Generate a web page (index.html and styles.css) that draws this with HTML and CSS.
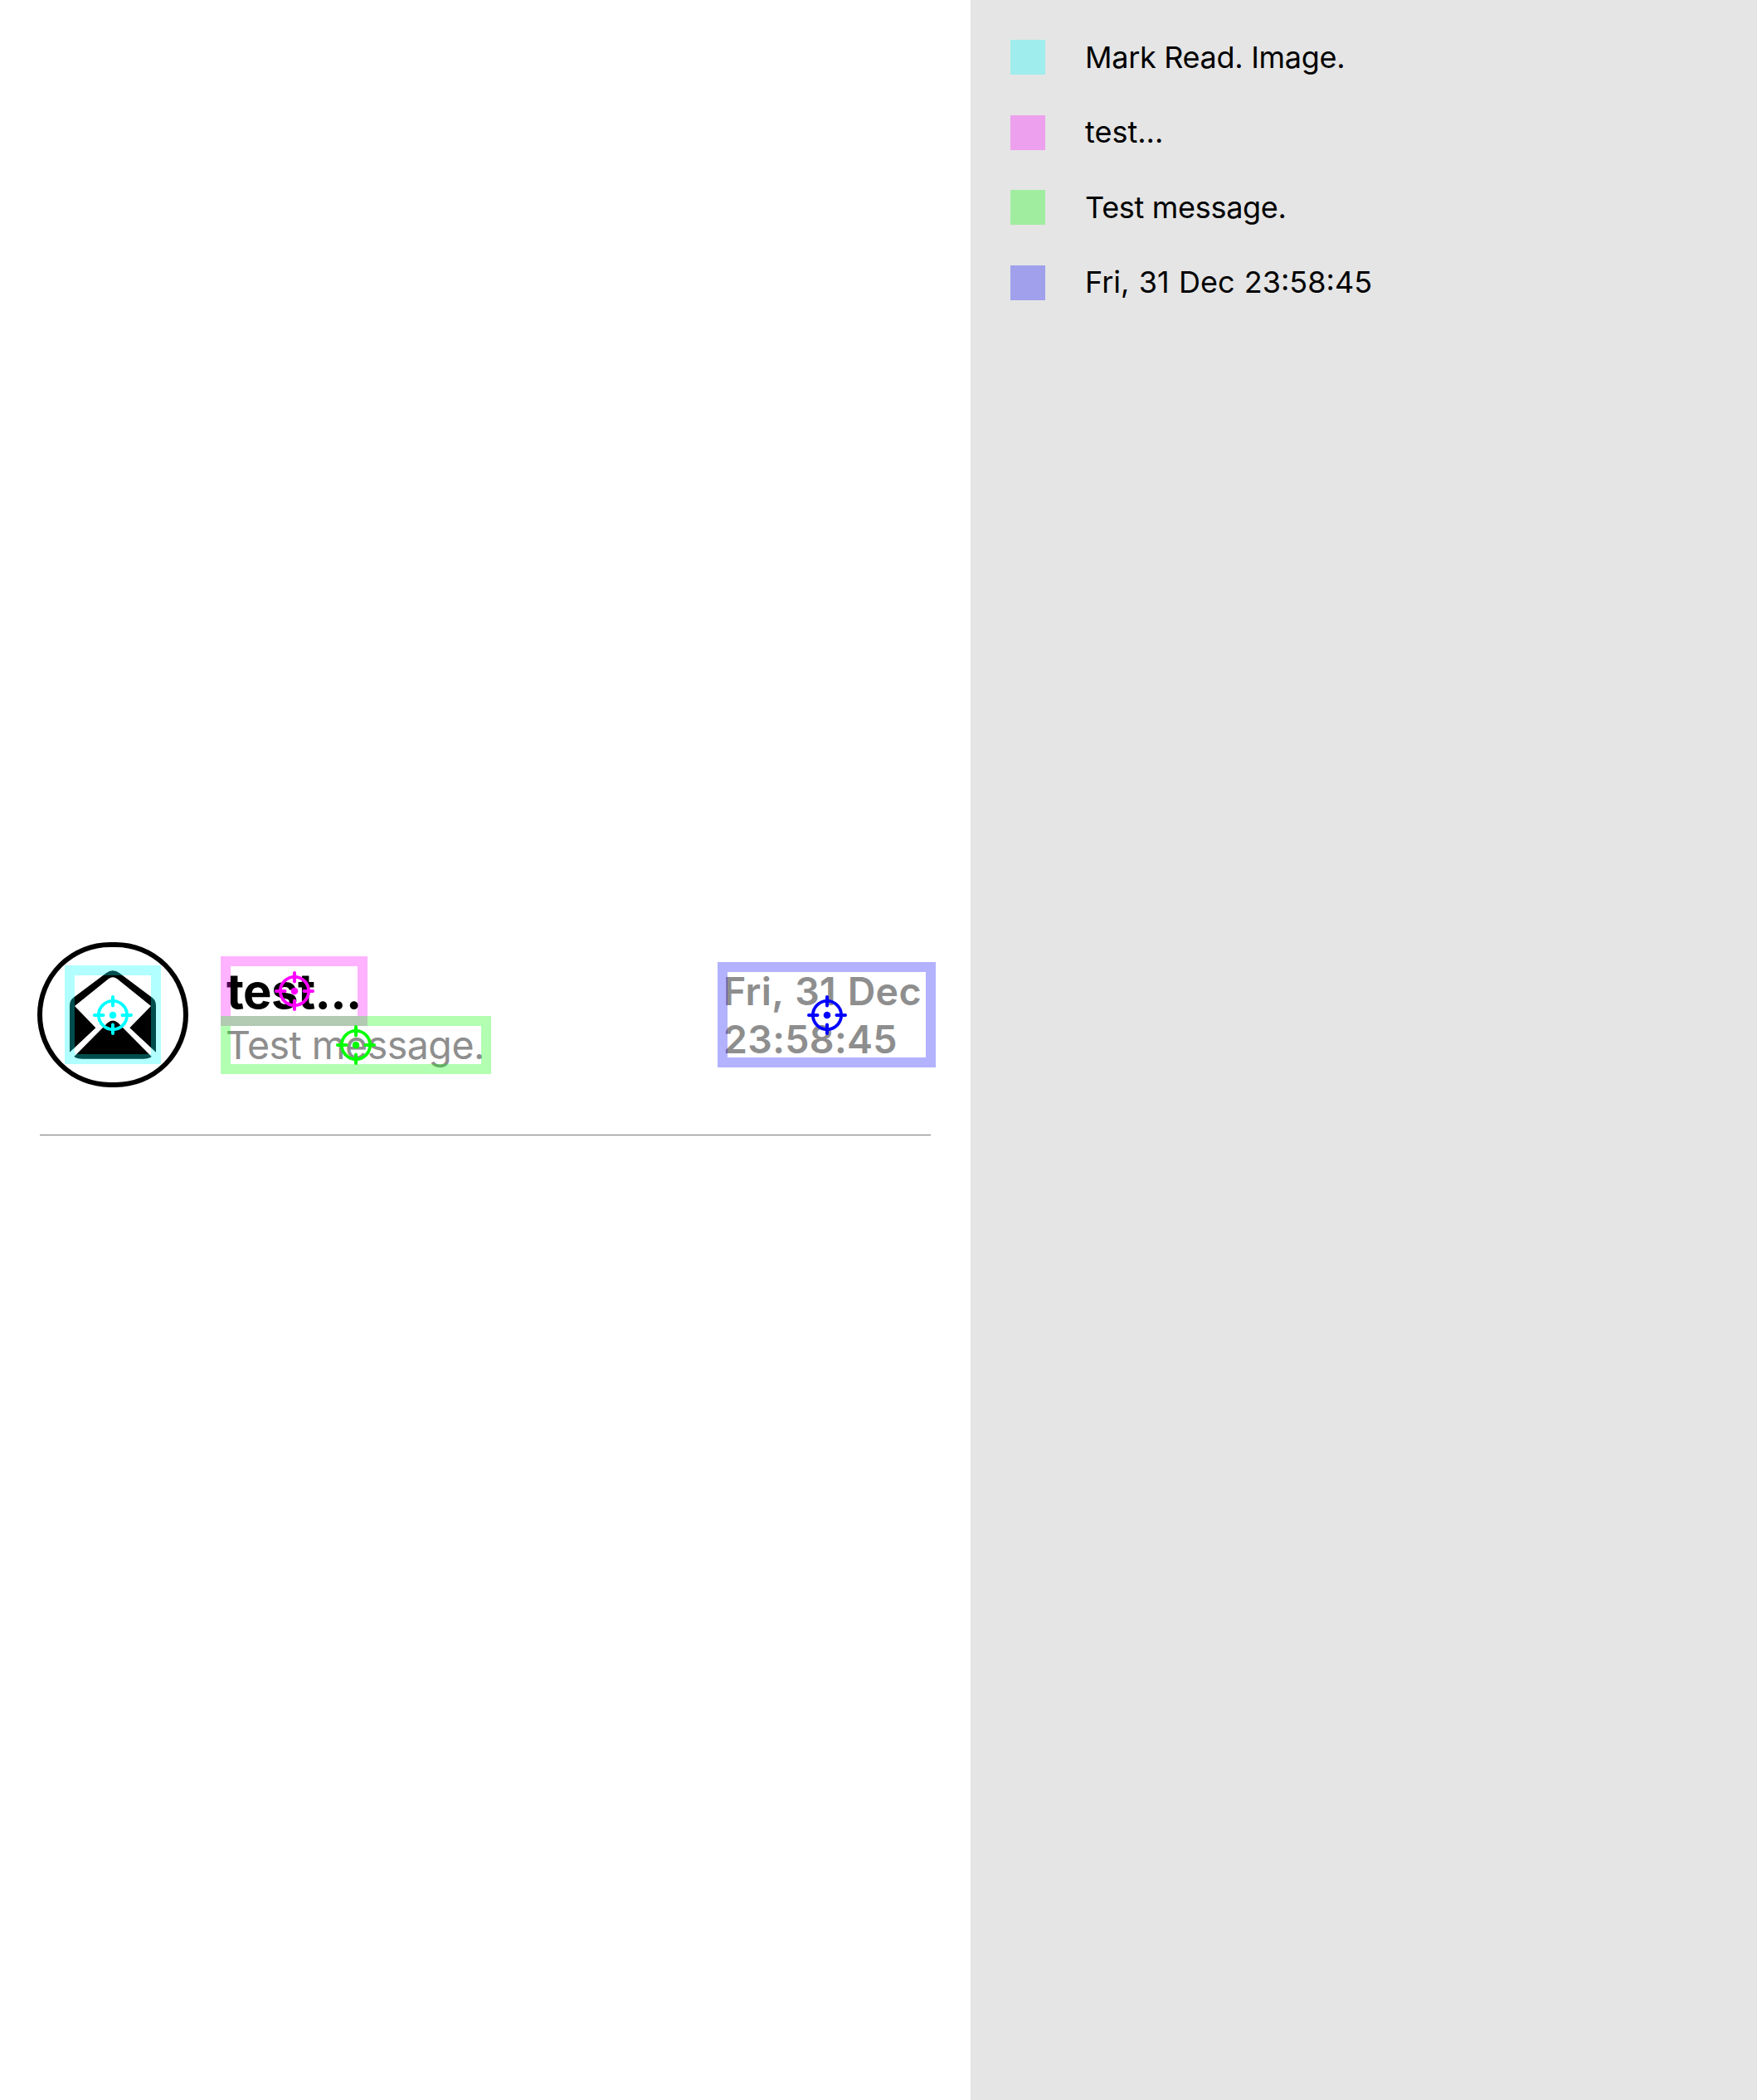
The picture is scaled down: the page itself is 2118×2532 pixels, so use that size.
FILE: index.html
```
<!DOCTYPE html>
<html lang="en">
<head>
<meta charset="utf-8">
<title>Message cell accessibility</title>
<link rel="stylesheet" href="styles.css">
</head>
<body>
<svg class="defs" aria-hidden="true">
  <symbol id="target" viewBox="-24 -24 48 48">
    <circle r="17.1" fill="none" stroke="currentColor" stroke-width="3.8"/>
    <circle r="4.3" fill="currentColor"/>
    <path d="M0-22v10.5M0 22v-10.5M-22 0h10.5M22 0h-10.5" fill="none" stroke="currentColor" stroke-width="4" stroke-linecap="round"/>
  </symbol>
</svg>
<main class="preview">
  <article class="cell">
    <div class="avatar">
      <div class="element cyan envelope">
        <svg viewBox="144 133 312 320" width="104" height="106.67">
          <path fill="#000" fill-rule="evenodd" d="M144 429V260Q144 242 157 232L276 143Q300 125 324 143L443 232Q456 242 456 260V429L361 341L438 262L315 163Q300 152 285 163L162 262L238 341Z"/>
          <path fill="#000" d="M160 445L281 323Q300 306 319 323L440 445Q430 453 410 453H190Q170 453 160 445Z"/>
        </svg>
        <span class="outline"></span>
        <svg class="target"><use href="#target"/></svg>
      </div>
    </div>
    <div class="texts">
      <div class="element magenta title"><span>test...</span><span class="outline"></span><svg class="target"><use href="#target"/></svg></div>
      <div class="element green message"><span>Test message.</span><span class="outline"></span><svg class="target"><use href="#target"/></svg></div>
    </div>
    <div class="element blue date"><span>Fri, 31 Dec</span><span>23:58:45</span><span class="outline"></span><svg class="target"><use href="#target"/></svg></div>
  </article>
  <hr class="separator">
</main>
<aside class="legend">
  <div class="entry cyan"><span class="swatch"></span><span class="label tight">Mark Read. Image.</span></div>
  <div class="entry magenta"><span class="swatch"></span><span class="label">test...</span></div>
  <div class="entry green"><span class="swatch"></span><span class="label tight">Test message.</span></div>
  <div class="entry blue"><span class="swatch"></span><span class="label stamp">Fri, 31 Dec 23:58:45</span></div>
</aside>
</body>
</html>
```

FILE: styles.css
```
* { box-sizing: border-box; }
body {
  margin: 0;
  display: flex;
  min-height: 2532px;
  background: #fff;
  color: #000;
  font-family: Inter, "Liberation Sans", sans-serif;
}
.defs { position: absolute; width: 0; height: 0; }
.cyan { --mark: #0ff; }
.magenta { --mark: #f0f; }
.green { --mark: #0f0; }
.blue { --mark: #00f; }

.preview { width: 1170px; padding: 1136px 48px 0 45px; }
.cell { display: flex; align-items: center; height: 175px; }
.avatar {
  display: flex;
  align-items: center;
  justify-content: center;
  width: 182px;
  height: 175px;
  border: 6px solid #000;
  border-radius: 88px;
}
.texts { margin-left: 45px; }
.element { position: relative; white-space: nowrap; }
.outline {
  position: absolute;
  inset: -6px;
  border: 12px solid var(--mark);
  opacity: .3;
}
.target {
  position: absolute;
  left: calc(50% - 24px);
  top: calc(50% - 24px);
  width: 48px;
  height: 48px;
  color: var(--mark);
}
.envelope { width: 104px; height: 107px; }
.envelope > svg:first-child { display: block; }
.title {
  width: 165px;
  height: 72px;
  padding-left: 1px;
  font-size: 58px;
  font-weight: 700;
  line-height: 72px;
  letter-spacing: -.6px;
}
.message {
  width: 314px;
  height: 58px;
  color: #8e8e8e;
  font-size: 46.5px;
  line-height: 58px;
  letter-spacing: -.5px;
}
.date {
  width: 251px;
  height: 115px;
  margin-left: auto;
  padding-left: 1px;
  color: #8e8e8e;
  font-size: 46.5px;
  font-weight: 600;
  line-height: 58px;
  letter-spacing: .3px;
  word-spacing: 1.7px;
}
.date > span:not(.outline) { display: block; }
.separator { height: 1px; margin: 57px 0 0 3px; border: 0; background: #777; }

.legend {
  flex: 1;
  display: flex;
  flex-direction: column;
  gap: 48.5px;
  padding: 48px;
  background: #e5e5e5;
}
.entry { display: flex; gap: 48px; height: 42px; font-size: 36px; line-height: 42px; white-space: nowrap; }
.swatch { width: 42px; height: 42px; background: var(--mark); opacity: .3; }
.label { margin-top: -.5px; }
.tight { letter-spacing: -.3px; }
.stamp { word-spacing: 1.2px; }
```
